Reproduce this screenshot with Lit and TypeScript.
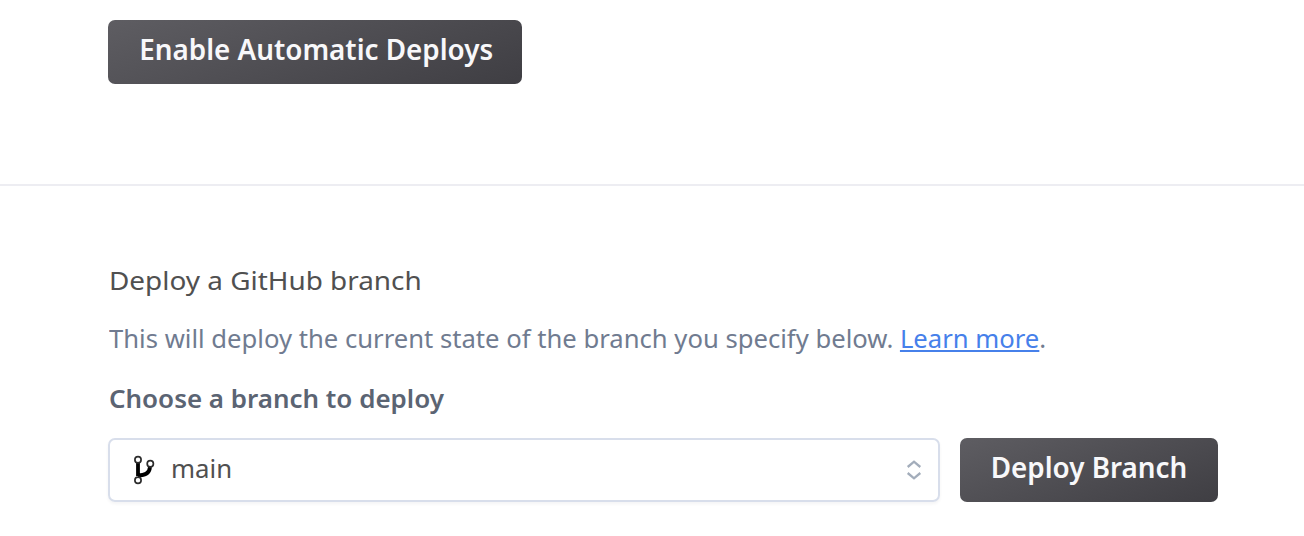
import { LitElement, html, css } from 'lit';
import { customElement } from 'lit/decorators.js';

@customElement('app-root')
export class AppRoot extends LitElement {
  static styles = css`
    :host { display: block; height: 536px; background: #fff; overflow: hidden; font-family: "Noto Sans", sans-serif; }
    * { box-sizing: border-box; }
    .auto { height: 186px; padding: 20px 0 0 108px; border-bottom: 2px solid #ededf2; }
    .btn { height: 64px; border: 0; padding: 0 0 6px; border-radius: 7px; background: linear-gradient(160deg, #5e5d62, #3f3e43); color: #f8f8fa; font: 600 28px/1 "Noto Sans", sans-serif; white-space: nowrap; }
    .btn span { display: inline-block; transform: scaleX(.993); }
    .enable { width: 414px; padding-left: 2px; }
    .deploy { width: 258px; }
    .manual { padding: 75px 86px 0 108px; }
    h2, p { margin: 0; white-space: nowrap; }
    h2, p, .label { padding-left: .6px; }
    h2 span, p .line, .label span, .name span { display: inline-block; transform-origin: 0 50%; }
    h2 { font-size: 26px; font-weight: 400; line-height: 38px; color: #505050; }
    h2 span { transform: scaleX(1.073); }
    p { margin-top: 20px; font-size: 25px; line-height: 38px; color: #707b90; }
    p .line { transform: scaleX(1.0255); }
    a { color: #4680ea; text-decoration: underline; text-decoration-thickness: 2px; text-underline-offset: 2px; text-decoration-skip-ink: none; }
    .label { display: block; margin-top: 22px; font-size: 25px; font-weight: 600; line-height: 38px; color: #5b6473; }
    .label span { transform: scaleX(1.038); }
    .row { display: flex; gap: 20px; margin-top: 21px; }
    .select { flex: 1; height: 64px; border: 2px solid #d8deeb; border-radius: 7px; box-shadow: 0 2px 3px rgba(60, 60, 90, .06); display: flex; align-items: center; padding: 0 15px 0 20px; font-size: 25px; color: #505050; }
    .name { flex: 1; margin-left: 13px; padding-bottom: 5px; }
    .name span { transform: scaleX(1.03); }
    svg { display: block; fill: none; flex: none; }
  `;
  render() {
    return html`
      <section class="auto"><button class="btn enable"><span>Enable Automatic Deploys</span></button></section>
      <section class="manual">
        <h2><span>Deploy a GitHub branch</span></h2>
        <p><span class="line">This will deploy the current state of the branch you specify below. <a>Learn more</a>.</span></p>
        <label class="label"><span>Choose a branch to deploy</span></label>
        <div class="row">
          <div class="select">
            <svg width="28" height="32" viewBox="0 0 28 32">
              <path d="M8 9V22M8 21.5C15 21.5 19.5 19 20 13" stroke="#000" stroke-width="3.8"/>
              <g fill="#fff" stroke="#2c2c2c" stroke-width="1.7"><circle cx="8" cy="5.8" r="3.1"/><circle cx="20.3" cy="9.8" r="3.1"/><circle cx="8" cy="26.2" r="3.1"/></g>
            </svg>
            <span class="name"><span>main</span></span>
            <svg width="18" height="24" viewBox="0 0 18 24"><path d="M2.7 9L9 3.7L15.3 9M2.7 15L9 20.3L15.3 15" stroke="#a3adbb" stroke-width="2.3"/></svg>
          </div>
          <button class="btn deploy"><span>Deploy Branch</span></button>
        </div>
      </section>`;
  }
}
